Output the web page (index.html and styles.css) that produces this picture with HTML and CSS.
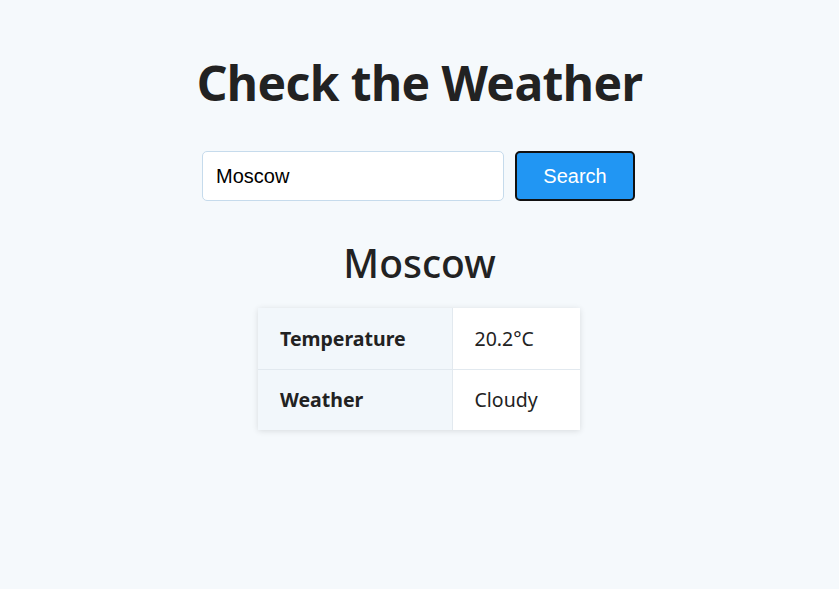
FILE: index.html
```html
<!DOCTYPE html>
<html lang="en">
<head>
<meta charset="utf-8">
<title>Check the Weather</title>
<link rel="stylesheet" href="styles.css">
</head>
<body>
<main class="app">
  <h1 class="title">Check the Weather</h1>
  <form class="search">
    <input class="search-input" type="text" value="Moscow">
    <button class="search-button" type="button">Search</button>
  </form>
  <h2 class="city">Moscow</h2>
  <div class="card">
    <table class="weather">
      <tbody>
        <tr>
          <th>Temperature</th>
          <td>20.2°C</td>
        </tr>
        <tr>
          <th>Weather</th>
          <td>Cloudy</td>
        </tr>
      </tbody>
    </table>
  </div>
</main>
</body>
</html>
```

FILE: styles.css
```css
html, body {
  margin: 0;
  padding: 0;
  background: #f5f9fc;
}

body {
  min-height: 100vh;
  font-family: "Noto Sans", "Open Sans", sans-serif;
  color: #222;
}

.app {
  display: flex;
  flex-direction: column;
  align-items: center;
  padding: 48px 0 60px;
}

.title {
  margin: 0;
  font-size: 48px;
  letter-spacing: -0.6px;
  font-weight: 700;
  line-height: 70px;
  color: #222;
}

.search {
  display: flex;
  gap: 11px;
  margin-top: 33px;
  margin-right: 2px;
}

.search-input {
  box-sizing: border-box;
  width: 302px;
  height: 50px;
  padding: 0 13px;
  border: 1px solid #c6dbec;
  border-radius: 5px;
  background: #fff;
  font-family: "Liberation Sans", Arial, sans-serif;
  font-size: 20px;
  color: #000;
  outline: none;
}

.search-button {
  box-sizing: border-box;
  width: 120px;
  height: 50px;
  border: 2px solid #111;
  border-radius: 5px;
  background: #2196f3;
  color: #fff;
  font-family: "Liberation Sans", Arial, sans-serif;
  font-size: 20px;
  cursor: pointer;
}

.city {
  margin: 36px 0 0;
  font-size: 39px;
  font-weight: 500;
  line-height: 52px;
  color: #222;
}

.card {
  margin-top: 19px;
  margin-right: 1px;
  background: #fff;
  box-shadow: 0 1px 6px rgba(0, 0, 0, 0.12);
}

.weather {
  border-collapse: collapse;
  font-size: 19.5px;
}

.weather th,
.weather td {
  height: 61px;
  padding: 0 22px;
  text-align: left;
  border: 1px solid #e2e9ef;
  box-sizing: border-box;
}

.weather tr:first-child th,
.weather tr:first-child td {
  border-top: none;
}

.weather tr:last-child th,
.weather tr:last-child td {
  border-bottom: none;
}

.weather th {
  border-left: none;
  width: 194px;
  background: #f2f7fb;
  font-weight: 700;
}

.weather td {
  border-right: none;
  width: 128px;
  font-weight: 400;
}
```
